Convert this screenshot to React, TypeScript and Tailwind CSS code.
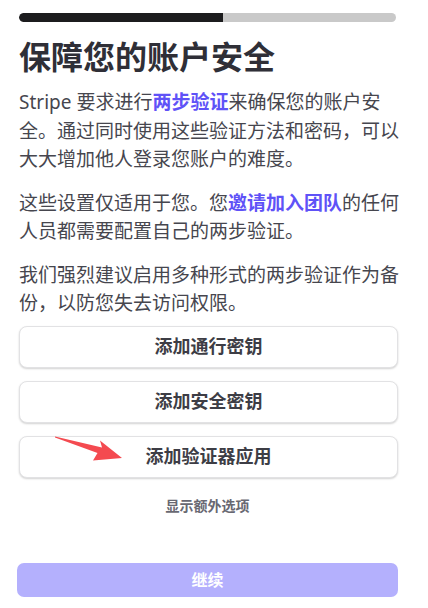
const OPTIONS = ["添加通行密钥", "添加安全密钥", "添加验证器应用"];

function Arrow() {
  return (
    <svg
      className="absolute left-0 top-0 pointer-events-none"
      width="428"
      height="608"
      viewBox="0 0 428 608"
    >
      <polygon
        points="55,436.5 102,447.5 100,440.5 122,458 93,460.5 97.5,453 55,437.5"
        fill="#f44a50"
      />
    </svg>
  );
}

export default function App() {
  return (
    <div
      className="relative w-[428px] h-[608px] bg-white px-[19px] overflow-hidden"
      style={{ fontFamily: '"Noto Sans", "Noto Sans CJK SC", sans-serif' }}
    >
      {/* Progress */}
      <div className="mt-[13px] h-[9px] w-[377px] rounded-full bg-[#c9c9c9] flex overflow-hidden">
        <div className="h-full w-[204px] bg-[#1c1c1e] rounded-l-full" />
      </div>

      <h1 className="mt-[15px] text-[32px] leading-[40px] font-bold text-[#2f2f37]">
        保障您的账户安全
      </h1>

      <div className="mt-[11px] text-[19px] leading-[28.5px] text-[#46464e] flex flex-col gap-[15px]">
        <p>
          Stripe 要求进行<span className="text-[#5f52f7] font-semibold">两步验证</span>
          来确保您的账户安全。通过同时使用这些验证方法和密码，可以大大增加他人登录您账户的难度。
        </p>
        <p>
          这些设置仅适用于您。您<span className="text-[#5f52f7] font-semibold">邀请加入团队</span>
          的任何人员都需要配置自己的两步验证。
        </p>
        <p>我们强烈建议启用多种形式的两步验证作为备份，以防您失去访问权限。</p>
      </div>

      <div className="mt-[8px] flex flex-col gap-[13px]">
        {OPTIONS.map((label) => (
          <button
            key={label}
            className="h-[42px] w-[379px] rounded-[8px] border border-[#e2e2e4] bg-white shadow-[0_1px_2px_rgba(0,0,0,0.18)] text-[18px] font-bold text-[#3d3d45] flex items-center justify-center"
          >
            {label}
          </button>
        ))}
      </div>

      <div className="mt-[18px] w-[377px] text-center text-[14px] leading-[20px] font-semibold text-[#686872]">
        显示额外选项
      </div>

      <button className="mt-[47px] h-[34px] w-[381px] -ml-[2px] rounded-[7px] bg-[#b4b0fd] text-white text-[16px] font-bold flex items-center justify-center">
        继续
      </button>

      <Arrow />
    </div>
  );
}
